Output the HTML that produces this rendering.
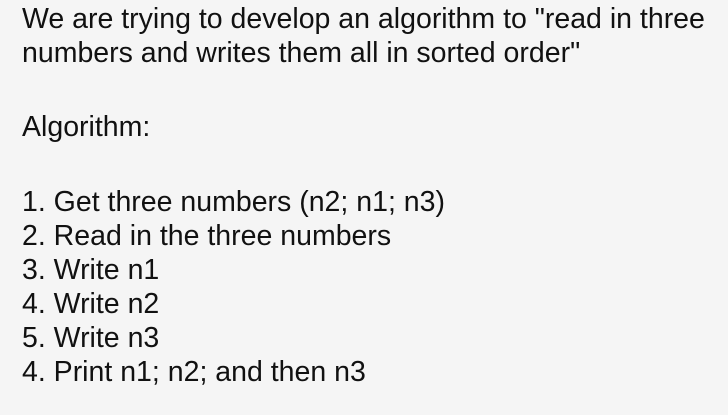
<!DOCTYPE html>
<html><head><meta charset="utf-8"><style>
html,body{margin:0;padding:0;background:#f5f5f5;width:728px;height:415px;overflow:hidden}
.t{position:absolute;left:22px;font-family:"Liberation Sans",sans-serif;font-size:28.5px;color:#111;white-space:nowrap;line-height:34px}
</style></head><body>
<div class="t" style="top:2px">We are trying to develop an algorithm to "read in three</div>
<div class="t" style="top:36px">numbers and writes them all in sorted order"</div>
<div class="t" style="top:110px">Algorithm:</div>
<div class="t" style="top:185px">1. Get three numbers (n2; n1; n3)</div>
<div class="t" style="top:219px">2. Read in the three numbers</div>
<div class="t" style="top:253px">3. Write n1</div>
<div class="t" style="top:287px">4. Write n2</div>
<div class="t" style="top:321px">5. Write n3</div>
<div class="t" style="top:355px">4. Print n1; n2; and then n3</div>
</body></html>
